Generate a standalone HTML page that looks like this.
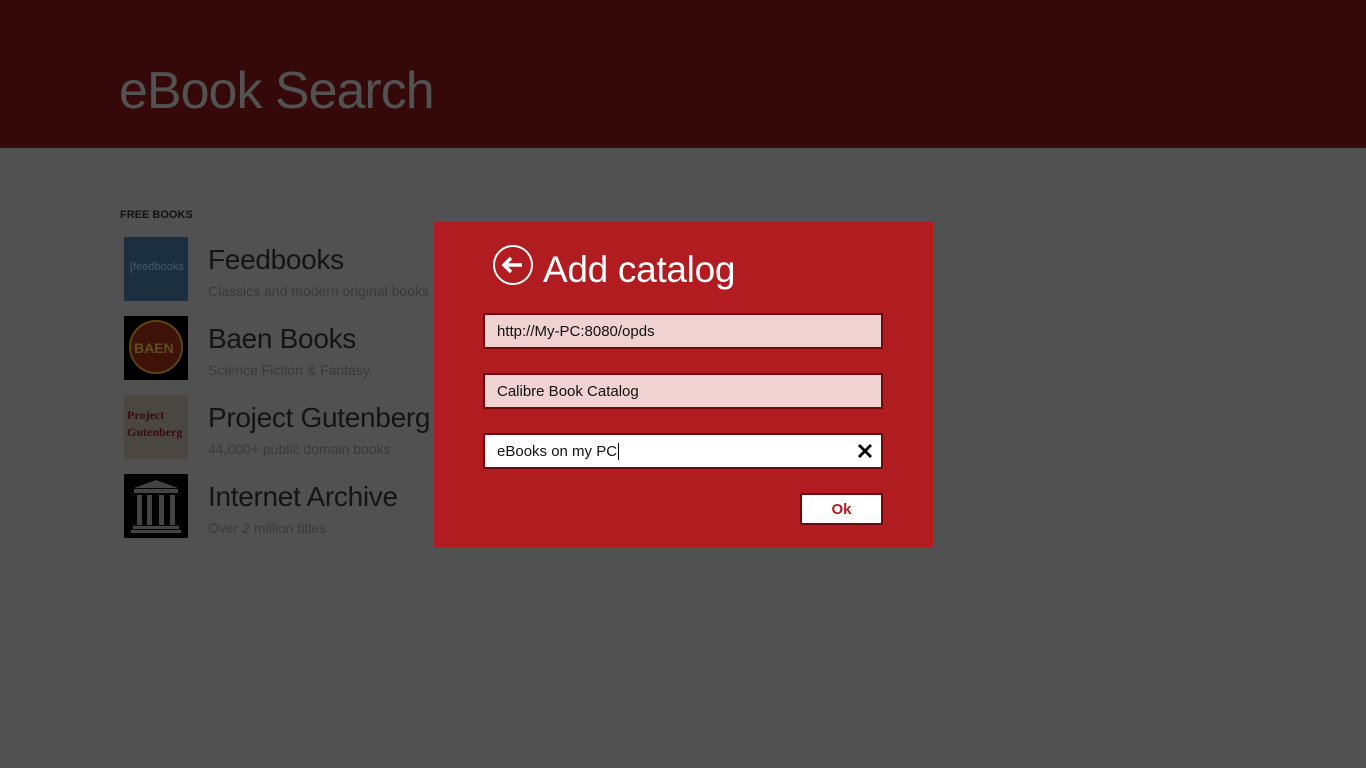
<!DOCTYPE html>
<html><head><meta charset="utf-8"><style>
*{margin:0;padding:0;box-sizing:border-box}
body{width:1366px;height:768px;background:#515151;position:relative;overflow:hidden;font-family:"Liberation Sans",sans-serif}
.hdr{position:absolute;left:0;top:0;width:1366px;height:148px;background:#350909}
.ttl{position:absolute;left:119px;top:61px;font-size:52px;color:#525252;letter-spacing:-1px;white-space:nowrap;font-weight:300}
.sec{position:absolute;left:120px;top:209px;font-size:11px;font-weight:bold;color:#111}
.it{position:absolute;left:124px;width:64px;height:64px}
.nm{position:absolute;left:208px;font-size:28px;color:#141414;white-space:nowrap;letter-spacing:-0.3px}
.ds{position:absolute;left:208px;font-size:14px;color:#3a3a3a;white-space:nowrap}
.dlg{position:absolute;left:434px;top:222px;width:499px;height:325px;background:#b01c1f}
.dt{position:absolute;left:543px;top:249px;font-size:37px;color:#fff;white-space:nowrap;letter-spacing:-0.3px}
.inp{position:absolute;left:483px;width:400px;height:36px;border:2px solid #6e0a0c;background:#f0d2d3;font-size:15px;color:#111;padding:8px 0 0 12px;white-space:nowrap}
.ok{position:absolute;left:800px;top:493px;width:83px;height:32px;background:#fff;border:2px solid #6e0a0c;color:#b01c1f;font-weight:bold;font-size:15px;text-align:center;line-height:30px}
</style></head><body>
<div class="hdr"><div class="ttl">eBook Search</div></div>
<div class="sec">FREE BOOKS</div>

<div class="it" style="top:237px;background:#1b2f3e"><div style="position:absolute;left:6px;top:24px;font-size:11px;color:#44596a">[feedbooks</div></div>
<div class="nm" style="top:244px">Feedbooks</div>
<div class="ds" style="top:283px">Classics and modern original books</div>

<div class="it" style="top:316px;background:#000"><div style="position:absolute;left:5px;top:4px;width:54px;height:54px;border-radius:50%;background:#3e1208;border:2px solid #5a4410"></div><div style="position:absolute;left:10px;top:24px;font-size:14px;font-weight:bold;color:#5e501c">BAEN</div></div>
<div class="nm" style="top:323px">Baen Books</div>
<div class="ds" style="top:362px">Science Fiction &amp; Fantasy</div>

<div class="it" style="top:395px;background:#4a4743"><div style="position:absolute;left:3px;top:12px;font-size:12px;line-height:17px;font-family:'Liberation Serif',serif;font-weight:bold;color:#3a0a0a">Project<br>Gutenberg</div></div>
<div class="nm" style="top:402px">Project Gutenberg</div>
<div class="ds" style="top:441px">44,000+ public domain books</div>

<div class="it" style="top:474px;background:#000">
<svg width="64" height="64"><polygon points="32,6 10,14 54,14" fill="#444"/><rect x="10" y="15" width="44" height="4" fill="#444"/><rect x="13" y="21" width="5" height="30" fill="#444"/><rect x="23" y="21" width="5" height="30" fill="#444"/><rect x="35" y="21" width="5" height="30" fill="#444"/><rect x="46" y="21" width="5" height="30" fill="#444"/><rect x="9" y="52" width="46" height="3" fill="#444"/><rect x="7" y="56" width="50" height="3" fill="#444"/></svg></div>
<div class="nm" style="top:481px">Internet Archive</div>
<div class="ds" style="top:520px">Over 2 million titles</div>

<div class="dlg"></div>
<svg style="position:absolute;left:492px;top:244px" width="42" height="42"><circle cx="21" cy="21" r="19" fill="none" stroke="#fff" stroke-width="2"/><path d="M12 21H30M19 14L12 21L19 28" fill="none" stroke="#fff" stroke-width="3.5"/></svg>
<div class="dt">Add catalog</div>
<div class="inp" style="top:313px">http://My-PC:8080/opds</div>
<div class="inp" style="top:373px">Calibre Book Catalog</div>
<div class="inp" style="top:433px;background:#fff">eBooks on my PC<span style="border-left:1px solid #000;margin-left:1px"></span>
<svg style="position:absolute;right:8px;top:8px" width="16" height="16"><path d="M2 2L14 14M14 2L2 14" stroke="#000" stroke-width="2.8"/></svg></div>
<div class="ok">Ok</div>
</body></html>
